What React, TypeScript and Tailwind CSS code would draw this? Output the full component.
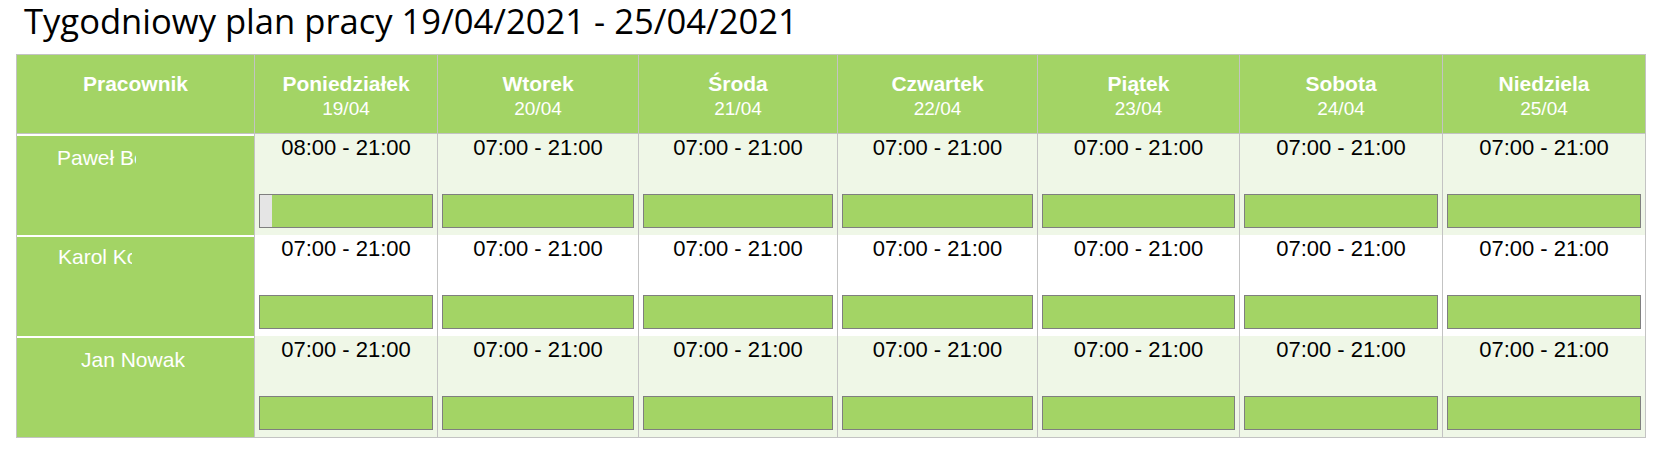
import React from "react";

const days = [
  { name: "Poniedziałek", date: "19/04", w: "w-[183px]" },
  { name: "Wtorek", date: "20/04", w: "w-[201px]" },
  { name: "Środa", date: "21/04", w: "w-[199px]" },
  { name: "Czwartek", date: "22/04", w: "w-[200px]" },
  { name: "Piątek", date: "23/04", w: "w-[202px]" },
  { name: "Sobota", date: "24/04", w: "w-[203px]" },
  { name: "Niedziela", date: "25/04", w: "w-[203px]" },
];

interface Employee {
  name: string;
  pad: string;
  clip?: string;
  top: string;
  bg: string;
  shifts: [number, number][];
}

const employees: Employee[] = [
  {
    name: "Paweł Borkowski",
    pad: "pl-[40px]",
    clip: "w-[79px]",
    top: "pt-[10px]",
    bg: "bg-[#eff7e7]",
    shifts: [[8, 21], [7, 21], [7, 21], [7, 21], [7, 21], [7, 21], [7, 21]],
  },
  {
    name: "Karol Kowalski",
    pad: "pl-[41px]",
    clip: "w-[74px]",
    top: "pt-[8px]",
    bg: "bg-white",
    shifts: [[7, 21], [7, 21], [7, 21], [7, 21], [7, 21], [7, 21], [7, 21]],
  },
  {
    name: "Jan Nowak",
    pad: "pl-[64px]",
    top: "pt-[10px]",
    bg: "bg-[#eff7e7]",
    shifts: [[7, 21], [7, 21], [7, 21], [7, 21], [7, 21], [7, 21], [7, 21]],
  },
];

const fmt = (h: number) => `${String(h).padStart(2, "0")}:00`;

function ShiftBar({ start }: { start: number }) {
  // bar covers 07:00 - 21:00, hours before the shift are grey
  const off = ((start - 7) / 14) * 100;
  return (
    <div className="flex h-[34px] border border-[#7f7f7f] bg-[#a3d465]">
      {off > 0 && <div className="h-full bg-[#e5e5e5]" style={{ width: `${off}%` }} />}
    </div>
  );
}

export default function App() {
  return (
    <div className="px-4 bg-white" style={{ fontFamily: "'Liberation Sans', Arial, sans-serif" }}>
      <h1
        className="pl-[8px] text-[34.6px] leading-[42px] text-black mb-[12px]"
        style={{ fontFamily: "'Open Sans', 'Noto Sans', sans-serif" }}
      >
        Tygodniowy plan pracy 19/04/2021 - 25/04/2021
      </h1>

      <div className="inline-block border border-[#c3c3c3]">
        <div className="flex h-[79px] bg-[#a3d465] text-white border-b border-[#c3c3c3]">
          <div className="w-[237px] pt-[17px] text-center text-[21px] leading-6 font-bold">Pracownik</div>
          {days.map((d) => (
            <div key={d.name} className={`${d.w} border-l border-[#c3c3c3] pt-[17px] text-center`}>
              <div className="text-[21px] leading-6 font-bold">{d.name}</div>
              <div className="text-[19px] leading-[25px]">{d.date}</div>
            </div>
          ))}
        </div>

        {employees.map((e) => (
          <div key={e.name} className={`flex h-[101px] ${e.bg}`}>
            <div className={`w-[237px] bg-[#a3d465] border-t-2 border-white ${e.top} ${e.pad}`}>
              <span
                className={`inline-block overflow-hidden whitespace-nowrap text-white text-[21px] leading-6 align-top ${e.clip ?? ""}`}
              >
                {e.name}
              </span>
            </div>
            {days.map((d, i) => (
              <div
                key={d.name}
                className={`${d.w} border-l border-[#c3c3c3] flex flex-col justify-between pt-[2px] pb-[7px] px-[4px]`}
              >
                <div className="text-center text-[22px] leading-6 text-black">
                  {fmt(e.shifts[i][0])} - {fmt(e.shifts[i][1])}
                </div>
                <ShiftBar start={e.shifts[i][0]} />
              </div>
            ))}
          </div>
        ))}
      </div>
    </div>
  );
}
